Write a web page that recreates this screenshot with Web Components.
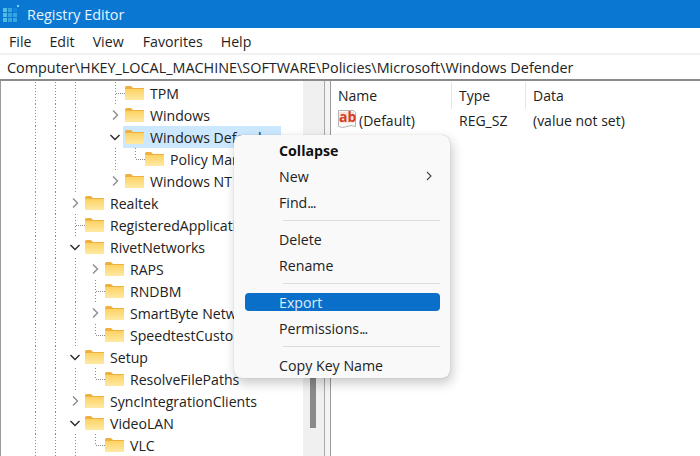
<!DOCTYPE html>
<html>
  <head>
    <meta charset="UTF-8" />
    <title>Registry Editor</title>
    <style>
      html, body { margin: 0; padding: 0; background: #fff; overflow: hidden; }
      body { font: 14px "Open Sans", "Liberation Sans", sans-serif; color: #1f1f1f; }
    </style>
  </head>
  <body>
    <reg-window>
      <reg-titlebar slot="title">Registry Editor</reg-titlebar>
      <reg-menubar slot="menu"></reg-menubar>
      <reg-address slot="address">Computer\HKEY_LOCAL_MACHINE\SOFTWARE\Policies\Microsoft\Windows Defender</reg-address>
      <reg-tree slot="tree">
        <reg-row cells="| | | _ T">TPM</reg-row>
        <reg-row cells="| | | _ >">Windows</reg-row>
        <reg-row cells="| | | _ v" selected>Windows Defender</reg-row>
        <reg-row cells="| | | _ | L">Policy Manager</reg-row>
        <reg-row cells="| | | _ >">Windows NT</reg-row>
        <reg-row cells="| | >">Realtek</reg-row>
        <reg-row cells="| | T">RegisteredApplications</reg-row>
        <reg-row cells="| | v">RivetNetworks</reg-row>
        <reg-row cells="| | | >">RAPS</reg-row>
        <reg-row cells="| | | T">RNDBM</reg-row>
        <reg-row cells="| | | >">SmartByte Network</reg-row>
        <reg-row cells="| | | L">SpeedtestCustom</reg-row>
        <reg-row cells="| | v">Setup</reg-row>
        <reg-row cells="| | | L">ResolveFilePaths</reg-row>
        <reg-row cells="| | >">SyncIntegrationClients</reg-row>
        <reg-row cells="| | v">VideoLAN</reg-row>
        <reg-row cells="| | | L">VLC</reg-row>
      </reg-tree>
      <reg-values slot="values"></reg-values>
      <reg-context-menu slot="overlay">
        <reg-menu-item bold>Collapse</reg-menu-item>
        <reg-menu-item submenu>New</reg-menu-item>
        <reg-menu-item dots="...">Find</reg-menu-item>
        <reg-menu-sep></reg-menu-sep>
        <reg-menu-item>Delete</reg-menu-item>
        <reg-menu-item>Rename</reg-menu-item>
        <reg-menu-sep></reg-menu-sep>
        <reg-menu-item active>Export</reg-menu-item>
        <reg-menu-item dots="...">Permissions</reg-menu-item>
        <reg-menu-sep></reg-menu-sep>
        <reg-menu-item>Copy Key Name</reg-menu-item>
      </reg-context-menu>
    </reg-window>

    <script>
      // small helper, every element below just sets its shadow html once
      class Base extends HTMLElement {
        constructor() {
          super();
          this.attachShadow({ mode: "open" });
        }
        connectedCallback() {
          this.shadowRoot.innerHTML = this.html();
        }
      }

      class RegWindow extends Base {
        html() {
          return `<style>
            :host { display: block; position: relative; width: 700px; height: 456px; overflow: hidden; }
            .split { display: flex; height: 376px; }
            .left { width: 324px; flex: none; }
            .gap { width: 5px; flex: none; border-left: 1px solid #a9a9a9; border-right: 1px solid #9a9a9a; background: #f4f4f4; }
            .right { flex: 1; min-width: 0; }
          </style>
          <slot name="title"></slot>
          <slot name="menu"></slot>
          <slot name="address"></slot>
          <div class="split">
            <div class="left"><slot name="tree"></slot></div>
            <div class="gap"></div>
            <div class="right"><slot name="values"></slot></div>
          </div>
          <slot name="overlay"></slot>`;
        }
      }

      class RegTitlebar extends Base {
        html() {
          let cubes = "";
          for (let r = 0; r < 3; r++) {
            for (let c = 0; c < 3; c++) {
              const fill = r == 0 && c == 2 ? "#0f86dd" : c == 0 ? "#52bde6" : "#38a6de";
              cubes += `<rect x="${2 + c * 5}" y="${6 + r * 5}" width="4" height="4" fill="${fill}"/>`;
            }
          }
          return `<style>
            :host { display: flex; align-items: center; height: 28px; background: #0a78d3; color: #e8f3fc; font-size: 14.4px; }
            svg { margin: 0 6px 0 1px; flex: none; }
          </style>
          <svg width="20" height="24" viewBox="0 0 20 24">${cubes}<rect x="16" y="3" width="2" height="2" fill="#7fd4f2"/></svg>
          <span><slot></slot></span>`;
        }
      }

      class RegMenubar extends Base {
        html() {
          return `<style>
            :host { display: flex; height: 24px; padding-top: 1px; align-items: center; background: #fff; font-size: 14.2px; }
            span { margin-left: var(--m); }
          </style>
          <span style="--m:9px">File</span>
          <span style="--m:18px">Edit</span>
          <span style="--m:18px">View</span>
          <span style="--m:19px">Favorites</span>
          <span style="--m:18px">Help</span>`;
        }
      }

      class RegAddress extends Base {
        html() {
          return `<style>
            :host { display: block; background: #f1f1f1; padding-top: 2px; border-bottom: 2px solid #8b8b8b; }
            div { height: 24px; line-height: 26px; background: #fff; padding-left: 7px; font-size: 14.4px; white-space: nowrap; color: #222; overflow: hidden; }
          </style>
          <div><slot></slot></div>`;
        }
      }

      class RegTree extends Base {
        html() {
          return `<style>
            :host { display: flex; height: 376px; overflow: hidden; border-left: 1px solid #9a9a9a; box-sizing: border-box; }
            .rows { flex: 1; min-width: 0; margin-left: -1px; padding-top: 1px; overflow: hidden; }
            .track { width: 21px; flex: none; background: #f0f0f0; padding: 220px 0 0 7px; box-sizing: border-box; }
            .thumb { width: 6px; height: 127px; background: #8a8a8a; }
          </style>
          <div class="rows"><slot></slot></div>
          <div class="track"><div class="thumb"></div></div>`;
        }
      }

      const FOLDER = `<svg class="folder" width="19" height="16" viewBox="0 0 19 16">
        <defs><linearGradient id="f" x1="0" y1="0" x2="0" y2="1">
          <stop offset="0" stop-color="#fdd263"/><stop offset="1" stop-color="#fee9a3"/>
        </linearGradient></defs>
        <path d="M0 2Q0 0 1.5 0H6L8 2H19V14H0Z" fill="#eeb041"/>
        <rect x="0" y="3" width="19" height="11" fill="url(#f)"/>
      </svg>`;

      class RegRow extends Base {
        html() {
          const cells = this.getAttribute("cells").split(" ").map((c) => {
            if (c == ">") return `<i class="c"><svg width="20" height="22"><path d="M8 6.5l4.5 4.5-4.5 4.5" fill="none" stroke="#8d8d8d" stroke-width="1.4"/></svg></i>`;
            if (c == "v") return `<i class="c"><svg width="20" height="22"><path d="M5.5 9l4.5 4.5 4.5-4.5" fill="none" stroke="#2b2b2b" stroke-width="1.4"/></svg></i>`;
            if (c == "|") return `<i class="c v"></i>`;
            if (c == "T") return `<i class="c v h"></i>`;
            if (c == "L") return `<i class="c l h"></i>`;
            return `<i class="c"></i>`;
          }).join("");
          return `<style>
            :host { display: flex; height: 22px; padding-left: 25px; white-space: nowrap; font-size: 14.1px; color: #222; }
            .c { display: block; flex: none; width: 20px; height: 22px; position: relative; }
            .c svg { display: block; }
            .v::before, .l::before { content: ""; position: absolute; left: 10px; top: 0; width: 1px; height: 22px;
              background: repeating-linear-gradient(to bottom, #8a8a8a 0 1px, transparent 1px 3px); }
            .l::before { height: 12px; }
            .h::after { content: ""; position: absolute; left: 11px; top: 11px; width: 9px; height: 1px;
              background: repeating-linear-gradient(to right, #8a8a8a 0 1px, transparent 1px 2px); }
            .item { display: flex; align-items: center; gap: 6px; height: 22px; margin-left: -2px; padding-left: 2px; }
            :host([selected]) .item { background: #cce8ff; width: 156px; }
            .folder { flex: none; margin-top: 2px; }
          </style>
          ${cells}
          <div class="item">${FOLDER}<span><slot></slot></span></div>`;
        }
      }

      class RegValues extends Base {
        html() {
          return `<style>
            :host { display: block; font-size: 14px; color: #222; }
            .head, .row { display: grid; grid-template-columns: 121px 74px 1fr; }
            .head { height: 29px; align-items: center; }
            .head span { height: 27px; line-height: 27px; padding-left: 7px; border-right: 1px solid #e5e5e5; }
            .head span:last-child { border: 0; }
            .row { height: 20px; align-items: center; }
            .row > span { padding-left: 7px; white-space: nowrap; }
            .row > span:first-child { display: flex; align-items: center; gap: 2px; padding-left: 6px; height: 20px; }
            svg { flex: none; margin-top: -2px; overflow: visible; }
            text { font: bold 14px "Open Sans", sans-serif; fill: #d43f25; }
          </style>
          <div class="head"><span>Name</span><span>Type</span><span>Data</span></div>
          <div class="row">
            <span><svg width="20" height="20" viewBox="0 0 20 20">
              <path d="M1.5 1.5H16.5L18.5 3.5V17.5Q14 15.5 10 17.5T1.5 17.5Z" fill="#fbfbfb" stroke="#b5b5b5"/>
              <rect x="2" y="3" width="15" height="11" fill="#fbe4dd"/>
              <text x="2" y="13">ab</text>
            </svg>(Default)</span>
            <span>REG_SZ</span>
            <span>(value not set)</span>
          </div>`;
        }
      }

      class RegContextMenu extends Base {
        html() {
          return `<style>
            :host { display: block; position: absolute; left: 234px; top: 135px; width: 216px; height: 243px; box-sizing: border-box;
              padding-top: 2px; background: #f9f9f9; border-radius: 8px; overflow: hidden;
              box-shadow: 0 0 1px rgba(0,0,0,.3), 2px 5px 12px rgba(0,0,0,.22); font-size: 14.2px; color: #222; }
          </style>
          <slot></slot>`;
        }
      }

      class RegMenuItem extends Base {
        html() {
          const arrow = this.hasAttribute("submenu")
            ? `<svg width="6" height="10" viewBox="0 0 6 10"><path d="M1 1l4 4-4 4" fill="none" stroke="#444" stroke-width="1.1"/></svg>`
            : "";
          const dots = this.getAttribute("dots") || "";
          return `<style>
            :host { display: block; height: 26px; padding: 4px 10px 4px 11px; box-sizing: border-box; }
            div { display: flex; align-items: center; justify-content: space-between; height: 18px; padding: 0 8px 0 34px; border-radius: 4px; }
            :host([bold]) div { font-weight: 700; color: #111; }
            :host([active]) div { background: #0a6fc8; color: #dcecf9; }
            b { font-weight: 400; letter-spacing: -1px; }
          </style>
          <div><span><slot></slot><b>${dots}</b></span>${arrow}</div>`;
        }
      }

      class RegMenuSep extends Base {
        html() {
          return `<style>
            :host { display: block; height: 11px; padding: 5px 10px 0 49px; box-sizing: border-box; }
            div { height: 1px; background: #dcdcdc; }
          </style>
          <div></div>`;
        }
      }

      customElements.define("reg-window", RegWindow);
      customElements.define("reg-titlebar", RegTitlebar);
      customElements.define("reg-menubar", RegMenubar);
      customElements.define("reg-address", RegAddress);
      customElements.define("reg-tree", RegTree);
      customElements.define("reg-row", RegRow);
      customElements.define("reg-values", RegValues);
      customElements.define("reg-context-menu", RegContextMenu);
      customElements.define("reg-menu-item", RegMenuItem);
      customElements.define("reg-menu-sep", RegMenuSep);
    </script>
  </body>
</html>
